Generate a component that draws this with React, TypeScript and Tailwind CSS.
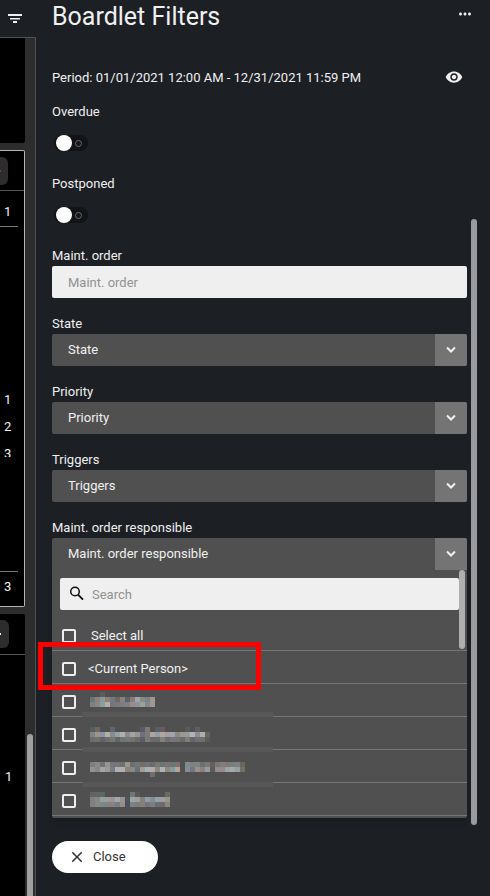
import React, { useState } from 'react';
import { MdVisibility, MdClose, MdMoreHoriz } from 'react-icons/md';

const focusRing = 'focus:outline-none focus-visible:ring-1 focus-visible:ring-white';

const pixelRows: { x: number; y: number; colors: string }[] = [
  { x: 8, y: 8, colors: '- - 595d5d' },
  { x: 8, y: 13, colors: '66757a 8f8078 899997 898079 77777f 6b6963 85827f 566468 867d78 9ba7a9 8c8a83 73858a a3958f' },
  { x: 8, y: 18, colors: '7c8280 898783 87a0a1 b6ae98 73738a 7b7873 807c86 7d827e 9a8d87 89929f 9aa19b 85898b a39692' },
  { x: 8, y: 43, colors: '555d60 6c6661 - - 626468 - - - - - 595b63 7b7974 - 555e62 655c5b - - - - 595a5b - 5d5e60' },
  { x: 8, y: 48, colors: '7e8588 9c928e 8e91a3 b2b1a0 8c8a92 93a2a4 b0afad 8e8b89 9da6a4 9c938d 6d7085 7c7a76 b1a29e 91a0a4 b3a6a2 a49f9f a0a2b1 8c897e 9f9791 929fa1 b5b3b0 8c8c92 acb0ad 6c645c' },
  { x: 8, y: 53, colors: '696e6d 72706d 616270 6c6f6b 777773 5d676a 737371 747775 727370 696a67 5d5e69 7b7974 6d6969 6b6b6c 80807c 716d6c 777674 747578 6e6964 7e7d79 63676a 71706f 6c706e 615a54' },
  { x: 8, y: 78, colors: '78817e 8b8986 707677 939491 787474 70777b 72706d 929990 706e69 6b7a78 766b6a 70727b 70696c 777977 6d7574 7b7471 697876 7e726f - 80898b 7f8281 7f8485 6b7073 777b78 67605a 7a7579 837e80 827977 758081 7d7f81 6b6660' },
  { x: 8, y: 83, colors: '92938d 8a8886 a2a5af a09790 7b7b86 aab1b8 b0b2a6 8c837e 8d8880 64727a a49b95 a2b3b8 b8aaa3 8b8884 aeb4b6 92877e 7ba0a3 b7a39c - 878b94 73758c 969383 927e82 929ca3 605851 908c8f 96898a 9ba5a7 a3aaa9 96a1a0 746e67' },
  { x: 8, y: 88, colors: '- - - - - - - - - - - - 706e70' },
  { x: 8, y: 108, colors: '636562 646461 5d6665 - - - - - 727674 585a59 - - - - - 666b68' },
  { x: 8, y: 113, colors: '7e817e 858783 8ca3a4 a19994 93969f a0a8af 99928b 50525b 9ba7a7 9c9f9f 86807c 919ba6 858c99 92a3a3 a09c9f 98967f' },
  { x: 8, y: 118, colors: '7c8280 868982 77898a 87827e 898081 767d82 958d88 4c505c 7a8388 7e7c79 887f7b 74757c 817d7b 647173 706b68 87887b' },
];

function MaskedNames() {
  return (
    <svg className="pointer-events-none absolute top-0 left-[30px]" width="191" height="132" shapeRendering="crispEdges" aria-hidden="true">
      {[28, 63, 98].map((y) => (
        <rect key={y} x="0" y={y} width="191" height="5" fill="#575757" />
      ))}
      {pixelRows.map((row) =>
        row.colors.split(' ').map((c, i) =>
          c === '-' ? null : <rect key={`${row.y}-${i}`} x={row.x + i * 5} y={row.y} width="5" height="5" fill={`#${c}`} />,
        ),
      )}
    </svg>
  );
}

function FilterIcon() {
  return (
    <svg width="16" height="16" viewBox="0 0 16 16" fill="currentColor" aria-hidden="true">
      <path d="M1 3h14v2H1zM3 7h10v1.5H3zM6 10h4v2H6z" />
    </svg>
  );
}

function ChevronIcon() {
  return (
    <svg width="16" height="16" viewBox="0 0 16 16" fill="none" stroke="currentColor" strokeWidth="2" aria-hidden="true">
      <path d="M4 5.5 8 9.5 12 5.5" />
    </svg>
  );
}

function SearchIcon() {
  return (
    <svg className="shrink-0 text-[#111111]" width="18" height="18" viewBox="0 0 18 18" fill="none" stroke="currentColor" strokeWidth="1.5" aria-hidden="true">
      <circle cx="7" cy="6.5" r="4.3" />
      <path d="M10 9.7 15 14.7" strokeWidth="1.9" />
    </svg>
  );
}

function Toggle({ id, label }: { id: string; label: string }) {
  return (
    <div className="flex h-[72px] flex-col items-start gap-[13px]">
      <label htmlFor={id} className="leading-5">{label}</label>
      <span className="relative ml-0.5 block h-4 w-[34px]">
        <input id={id} type="checkbox" role="switch" className={`peer block h-4 w-[34px] appearance-none rounded-full bg-[#121316] ${focusRing}`} />
        <span className="pointer-events-none absolute top-0 left-0.5 size-4 rounded-full bg-white peer-checked:left-4" />
        <span className="pointer-events-none absolute top-[5px] left-[21px] size-[7px] rounded-full border border-[#6a6b6d] peer-checked:hidden" />
      </span>
    </div>
  );
}

function SelectField({ id, label, open = false }: { id: string; label: string; open?: boolean }) {
  return (
    <div>
      <label htmlFor={id} className="block leading-5">{label}</label>
      <div className={`relative flex overflow-hidden bg-[#505050] ${open ? 'rounded-t-xs' : 'rounded-xs'}`}>
        <select id={id} className={`h-8 w-full appearance-none bg-transparent pr-8 pl-4 ${focusRing}`}>
          <option>{label}</option>
        </select>
        <span className="pointer-events-none absolute inset-y-0 right-0 flex w-8 items-center justify-center bg-[#747474]">
          <ChevronIcon />
        </span>
      </div>
    </div>
  );
}

function OptionRow({ label, wide = false, marked = false }: { label?: string; wide?: boolean; marked?: boolean }) {
  return (
    <label className={`relative flex h-[33px] items-center border-b border-[#757575] pt-[3px] pl-2.5 ${wide ? 'gap-[15px]' : 'gap-3'}`}>
      <input
        type="checkbox"
        aria-label={label ? undefined : 'Person'}
        className={`size-[14px] appearance-none rounded-xs border-2 border-[#eeeeee] checked:bg-[#eeeeee] ${focusRing}`}
      />
      {label}
      {marked && <span className="pointer-events-none absolute -top-[9px] -left-[14px] z-10 h-12 w-[223px] border-5 border-[#ff0000]" />}
    </label>
  );
}

function BoardStrip() {
  return (
    <aside className="flex w-9 shrink-0 flex-col overflow-hidden">
      <div className="flex h-[37px] items-center pl-[7px]">
        <button type="button" aria-label="Filter" className={focusRing}>
          <FilterIcon />
        </button>
      </div>
      <div className="flex flex-1 border-t border-r border-[#505154] bg-[#2d2d2d]">
        <div className="flex w-[25px] flex-col gap-[7px]">
          <div className="h-[105px] rounded-br-xs bg-black" />
          <div className="flex h-[457px] flex-col rounded-r-xs border-y border-r border-[#b5b5b5] bg-black">
            <div className="flex h-10 items-center border-b border-[#555555]">
              <button type="button" aria-label="Card alerts" className={`flex h-7 w-2 items-center rounded-r-md bg-[#2d2d2d] ${focusRing}`}>
                <span className="h-0.5 w-px bg-[#a03038]" />
              </button>
            </div>
            <div className="mr-1.5 flex h-9 items-center border-b border-[#777777] pt-1.5 pl-1">1</div>
            <div className="mt-[159px] flex h-[71px] flex-col overflow-hidden pl-1 leading-[27px]">
              <span>1</span>
              <span>2</span>
              <span>3</span>
            </div>
            <div className="mt-auto mr-1.5 flex h-[35px] items-center border-t border-[#777777] pb-1 pl-1">3</div>
          </div>
          <div className="flex-1 rounded-tr-xs bg-black">
            <div className="flex h-[41px] items-center border-b border-[#555555]">
              <button type="button" aria-label="Card actions" className={`flex h-7 w-[9px] items-center rounded-r-md bg-[#2d2d2d] ${focusRing}`}>
                <span className="h-0.5 w-px bg-white" />
              </button>
            </div>
            <div className="mt-28 pl-[5px] leading-5">1</div>
          </div>
        </div>
        <div className="mt-auto ml-0.5 h-[162px] w-1.5 rounded-t-full bg-[#a0a0a0]" />
      </div>
    </aside>
  );
}

export default function App() {
  const [query, setQuery] = useState('');
  return (
    <div className="flex min-h-screen bg-[#1c1f24] font-[Roboto,sans-serif] text-[13px] text-[#f0f0f0]">
      <BoardStrip />
      <main className="flex min-w-0 flex-1 flex-col pb-[23px] pl-4">
        <header className="flex h-[68px] items-start justify-between pr-4">
          <h1 className="text-[25px] leading-[34px]">Boardlet Filters</h1>
          <button type="button" aria-label="More options" className={`mt-[5px] ${focusRing}`}>
            <MdMoreHoriz className="size-[18px]" />
          </button>
        </header>
        <div className="flex gap-1 pr-[13px]">
          <form className="min-w-0 flex-1">
            <div className="flex h-[34px] items-start justify-between pr-1">
              <p className="leading-5">Period: 01/01/2021 12:00 AM - 12/31/2021 11:59 PM</p>
              <button type="button" aria-label="Show period" className={focusRing}>
                <MdVisibility className="size-[18px]" />
              </button>
            </div>
            <Toggle id="overdue" label="Overdue" />
            <Toggle id="postponed" label="Postponed" />
            <div className="flex flex-col gap-4">
              <div>
                <label htmlFor="order" className="block leading-5">Maint. order</label>
                <input id="order" type="text" placeholder="Maint. order" className={`block h-8 w-full rounded-xs bg-[#efefef] px-4 text-[#222222] placeholder:text-[#929292] ${focusRing}`} />
              </div>
              <SelectField id="state" label="State" />
              <SelectField id="priority" label="Priority" />
              <SelectField id="triggers" label="Triggers" />
              <div>
                <SelectField id="responsible" label="Maint. order responsible" open />
                <div className="relative rounded-b-xs bg-[#505050] pt-2 pb-0.5 shadow-md shadow-black/10">
                  <div className="mx-2 flex h-8 items-center gap-1.5 rounded-xs bg-[#efefef] px-2">
                    <SearchIcon />
                    <input
                      type="search"
                      aria-label="Search"
                      placeholder="Search"
                      value={query}
                      onChange={(e) => setQuery(e.target.value)}
                      className="h-8 w-full bg-transparent text-[#222222] outline-none placeholder:text-[#929292]"
                    />
                  </div>
                  <div className="pt-2">
                    <OptionRow label="Select all" wide />
                    <OptionRow label="<Current Person>" marked />
                    <div className="relative">
                      <OptionRow />
                      <OptionRow />
                      <OptionRow />
                      <OptionRow />
                      <MaskedNames />
                    </div>
                  </div>
                  <span className="absolute top-0 right-0.5 h-[79px] w-1.5 rounded-full bg-[#afafaf]" />
                </div>
              </div>
            </div>
          </form>
          <div className="-mb-[7px] w-1.5 pt-[151px]">
            <div className="h-full rounded-full bg-[#9a9b9e]" />
          </div>
        </div>
        <button type="button" className={`mt-[23px] flex h-8 w-[106px] items-center gap-[7px] rounded-full bg-white pl-4 text-[#333333] ${focusRing}`}>
          <MdClose className="size-[18px]" />
          Close
        </button>
      </main>
    </div>
  );
}
